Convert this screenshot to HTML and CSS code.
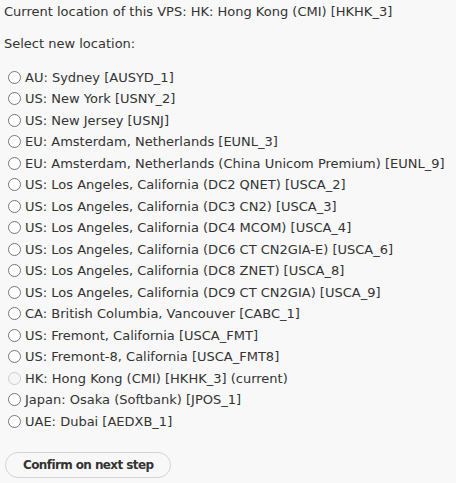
FILE: index.html
```html
<!DOCTYPE html>
<html>
<head>
<meta charset="utf-8">
<link rel="stylesheet" href="styles.css">
</head>
<body>
<div class="page">
  <p class="current">Current location of this VPS: HK: Hong Kong (CMI) [HKHK_3]</p>
  <p class="select">Select new location:</p>
  <div class="options">
    <label class="opt"><input type="radio" name="loc">AU: Sydney [AUSYD_1]</label>
    <label class="opt"><input type="radio" name="loc">US: New York [USNY_2]</label>
    <label class="opt"><input type="radio" name="loc">US: New Jersey [USNJ]</label>
    <label class="opt"><input type="radio" name="loc">EU: Amsterdam, Netherlands [EUNL_3]</label>
    <label class="opt"><input type="radio" name="loc">EU: Amsterdam, Netherlands (China Unicom Premium) [EUNL_9]</label>
    <label class="opt"><input type="radio" name="loc">US: Los Angeles, California (DC2 QNET) [USCA_2]</label>
    <label class="opt"><input type="radio" name="loc">US: Los Angeles, California (DC3 CN2) [USCA_3]</label>
    <label class="opt"><input type="radio" name="loc">US: Los Angeles, California (DC4 MCOM) [USCA_4]</label>
    <label class="opt"><input type="radio" name="loc">US: Los Angeles, California (DC6 CT CN2GIA-E) [USCA_6]</label>
    <label class="opt"><input type="radio" name="loc">US: Los Angeles, California (DC8 ZNET) [USCA_8]</label>
    <label class="opt"><input type="radio" name="loc">US: Los Angeles, California (DC9 CT CN2GIA) [USCA_9]</label>
    <label class="opt"><input type="radio" name="loc">CA: British Columbia, Vancouver [CABC_1]</label>
    <label class="opt"><input type="radio" name="loc">US: Fremont, California [USCA_FMT]</label>
    <label class="opt"><input type="radio" name="loc">US: Fremont-8, California [USCA_FMT8]</label>
    <label class="opt"><input type="radio" name="loc" disabled>HK: Hong Kong (CMI) [HKHK_3] (current)</label>
    <label class="opt"><input type="radio" name="loc">Japan: Osaka (Softbank) [JPOS_1]</label>
    <label class="opt"><input type="radio" name="loc">UAE: Dubai [AEDXB_1]</label>
  </div>
  <button class="confirm" type="button">Confirm on next step</button>
</div>
</body>
</html>
```

FILE: styles.css
```css
html, body {
  margin: 0;
  padding: 0;
  background: #f8f8f8;
}
.page {
  padding: 3px 4px;
  font-family: "DejaVu Sans", Verdana, sans-serif;
  font-size: 13px;
  color: #333;
}
.current {
  margin: 0;
  line-height: 18px;
}
.select {
  margin: 14px 0 0;
  line-height: 18px;
}
.options {
  margin-top: 13.5px;
  display: flex;
  flex-direction: column;
}
.opt {
  display: flex;
  align-items: center;
  height: 21.5px;
}
.opt input {
  margin: 0 4px 0 4px;
  width: 13px;
  height: 13px;
}
.confirm {
  margin-top: 20px;
  margin-left: 1px;
  font-family: "DejaVu Sans", Verdana, sans-serif;
  font-size: 12px;
  letter-spacing: -0.6px;
  font-weight: bold;
  color: #333;
  background: #f8f8f8;
  border: 1px solid #d4d4d4;
  border-radius: 13px;
  height: 26px;
  padding: 0 17px;
}
```
